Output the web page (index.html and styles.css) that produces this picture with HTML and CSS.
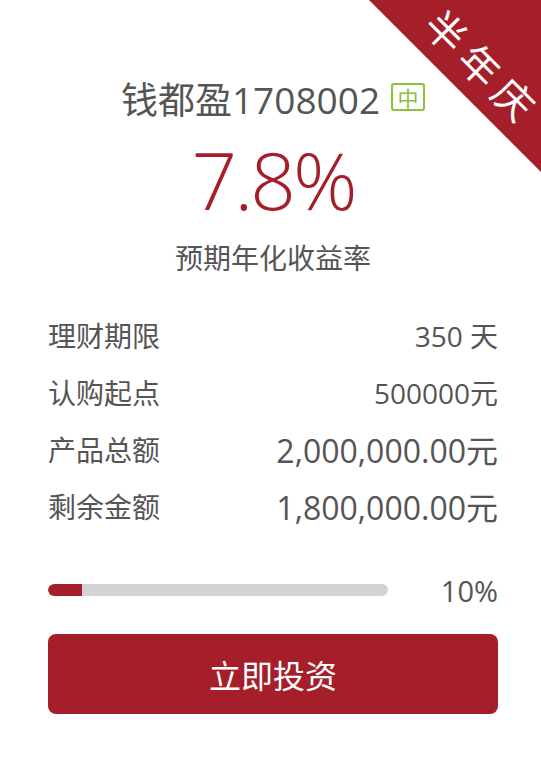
FILE: index.html
```html
<!DOCTYPE html>
<html lang="zh">
<head>
<meta charset="utf-8">
<link rel="stylesheet" href="styles.css">
</head>
<body>
<div class="card">
  <svg class="ribbon" width="172" height="172" viewBox="0 0 172 172">
    <polygon points="0,0 172,0 172,172" fill="#a51f2b"/>
    <text x="116" y="64" transform="rotate(45 112 64)" text-anchor="middle" dominant-baseline="central" class="ribbon-text">半年庆</text>
  </svg>
  <div class="title">
    <span class="name">钱都盈1708002</span>
    <span class="badge">中</span>
  </div>
  <div class="rate">7.8%</div>
  <div class="rate-label">预期年化收益率</div>
  <div class="rows">
    <div class="row"><span class="label">理财期限</span><span class="value small">350 天</span></div>
    <div class="row"><span class="label">认购起点</span><span class="value small">500000元</span></div>
    <div class="row"><span class="label">产品总额</span><span class="value">2,000,000.00元</span></div>
    <div class="row"><span class="label">剩余金额</span><span class="value">1,800,000.00元</span></div>
  </div>
  <div class="progress">
    <div class="track"><div class="fill" style="width:10%"></div></div>
    <span class="pct">10%</span>
  </div>
  <button class="invest">立即投资</button>
</div>
</body>
</html>
```
FILE: styles.css
```css
* { box-sizing: border-box; }
html, body { margin: 0; padding: 0; background: #fff; }
body {
  font-family: "Open Sans", "Noto Sans CJK SC", sans-serif;
  color: #555;
}
.card {
  position: relative;
  width: 541px;
  height: 778px;
  padding: 78px 43px 0 48px;
  overflow: hidden;
}
.ribbon {
  position: absolute;
  top: 0;
  right: 0;
}
.ribbon-text {
  fill: #fff;
  font-family: "Noto Sans CJK SC", sans-serif;
  font-size: 40px;
  letter-spacing: 8px;
}
.title {
  display: flex;
  justify-content: center;
  align-items: center;
  gap: 11px;
  height: 44px;
}
.name {
  font-size: 37px;
  line-height: 44px;
  color: #555;
}
.badge {
  display: flex;
  align-items: center;
  justify-content: center;
  width: 34px;
  height: 28px;
  margin-bottom: 6px;
  border: 2px solid #8cbf3a;
  border-radius: 3px;
  color: #8cbf3a;
  font-family: "Noto Sans CJK SC", sans-serif;
  font-size: 21px;
  line-height: 1;
}
.rate {
  text-align: center;
  font-size: 80px;
  font-weight: 300;
  letter-spacing: -3px;
  line-height: 90px;
  color: #a51f2b;
  margin-top: 12px;
}
.rate-label {
  text-align: center;
  font-family: "Noto Sans CJK SC", sans-serif;
  font-size: 28px;
  line-height: 40px;
  color: #555;
  margin-top: 13px;
}
.rows {
  margin-top: 29px;
  display: flex;
  flex-direction: column;
}
.row {
  display: flex;
  justify-content: space-between;
  align-items: center;
  height: 57px;
}
.label {
  font-family: "Noto Sans CJK SC", sans-serif;
  font-size: 28px;
  color: #555;
}
.value {
  font-size: 32px;
  color: #555;
}
.value.small { font-size: 28px; }
.progress {
  display: flex;
  align-items: center;
  justify-content: space-between;
  margin-top: 41px;
  height: 30px;
}
.track {
  width: 340px;
  height: 12px;
  border-radius: 6px;
  background: #d3d3d3;
  overflow: hidden;
}
.fill {
  height: 100%;
  background: #a51f2b;
  border-radius: 6px 0 0 6px;
}
.pct {
  font-size: 29px;
  color: #555;
}
.invest {
  display: block;
  width: 450px;
  height: 80px;
  margin-top: 29px;
  border: none;
  border-radius: 8px;
  background: #a51f2b;
  color: #fff;
  font-family: "Noto Sans CJK SC", sans-serif;
  font-size: 32px;
  padding: 0;
}
```
